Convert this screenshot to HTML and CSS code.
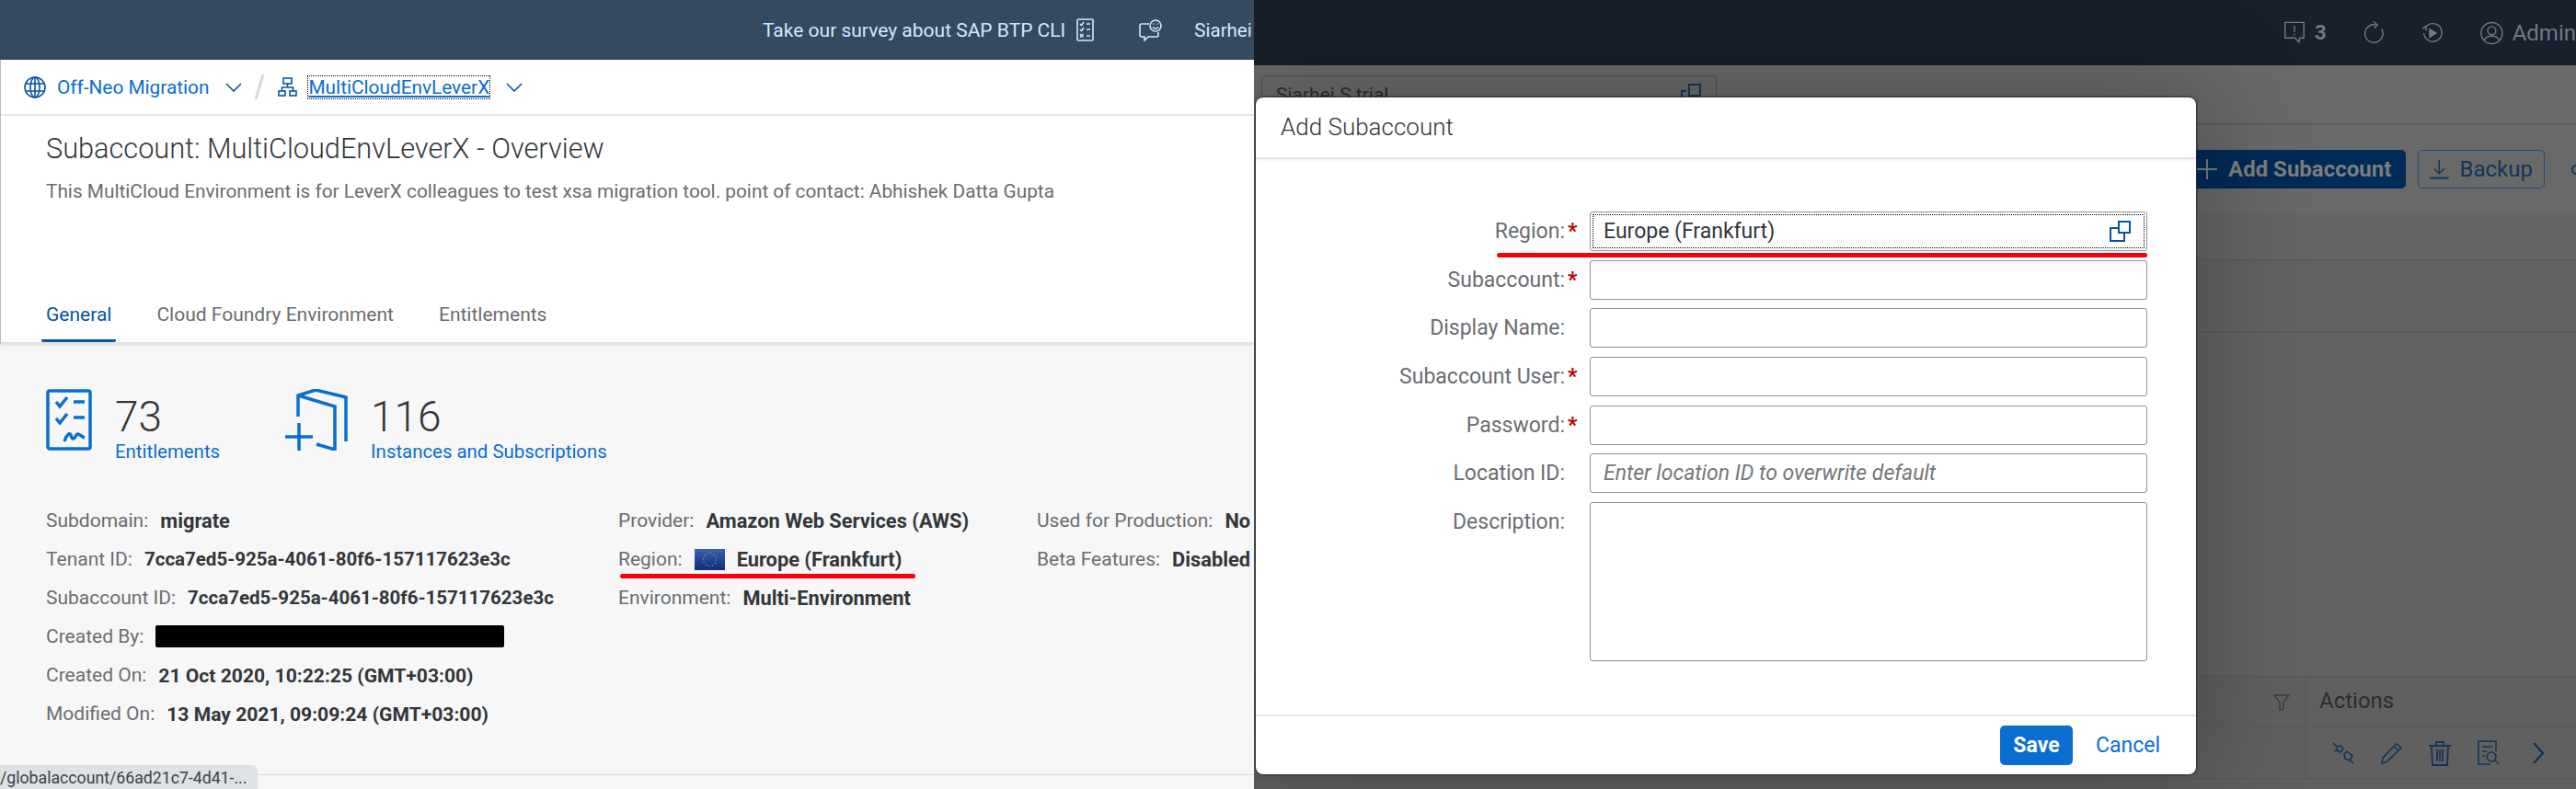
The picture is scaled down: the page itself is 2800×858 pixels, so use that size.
FILE: index.html
```html
<!DOCTYPE html>
<html lang="en">
<head>
    <meta charset="UTF-8">
    <title>Add Subaccount</title>
    <link rel="stylesheet" href="styles.css">
</head>
<body>
    <!-- left screenshot: subaccount overview -->
    <section class="overview">
        <header class="shell-bar">
            <span class="survey">Take our survey about SAP BTP CLI</span>
            <svg class="survey-icon" width="19" height="25" viewBox="0 0 19 25" fill="none" stroke="currentColor" stroke-width="1.6">
                <rect x="1" y="1" width="17" height="23" rx="1"/>
                <path d="M4 6l1.500 1.500L8 4M11 6h4M4 12l1.500 1.500L8 10M11 12h4M4 17l3.500 3.500M7.500 17L4 20.500M11 19h4"/>
            </svg>
            <svg class="feedback-icon" width="26" height="24" viewBox="0 0 26 24" fill="none" stroke="currentColor" stroke-width="1.6">
                <path d="M11 5H3a2 2 0 0 0-2 2v10a2 2 0 0 0 2 2h3v4l4-4h9a2 2 0 0 0 2-2v-3"/>
                <circle cx="18" cy="7" r="6"/>
                <path d="M15 8.500c1.500 2 4.500 2 6 0M16 4.500v1M20 4.500v1"/>
            </svg>
            <span class="user-name">Siarhei</span>
        </header>

        <div class="sheet">
            <nav class="crumbs">
                <svg class="globe" width="24" height="24" viewBox="0 0 24 24" fill="none" stroke="#0854a0" stroke-width="1.6">
                    <circle cx="12" cy="12" r="11"/>
                    <ellipse cx="12" cy="12" rx="5" ry="11"/>
                    <path d="M12 1v22M2 8h20M2 16h20"/>
                </svg>
                <a class="crumb-link">Off-Neo Migration</a>
                <svg class="chevron" width="18" height="10" viewBox="0 0 18 10" fill="none" stroke="#0854a0" stroke-width="1.600"><path d="M1 1l8 8 8-8"/></svg>
                <svg class="slash" width="10" height="27" viewBox="0 0 10 27" fill="none" stroke="#d9d9d9" stroke-width="3"><path d="M9 0L1 27"/></svg>
                <svg class="tree" width="21" height="21" viewBox="0 0 21 21" fill="none" stroke="#0854a0" stroke-width="1.600">
                    <rect x="6" y="1" width="9" height="6"/>
                    <rect x="1" y="15" width="7" height="5"/>
                    <rect x="13" y="15" width="7" height="5"/>
                    <path d="M10.500 7v4M4.500 15v-4h12v4"/>
                </svg>
                <a class="crumb-link crumb-current">MultiCloudEnvLeverX</a>
                <svg class="chevron chevron-last" width="18" height="10" viewBox="0 0 18 10" fill="none" stroke="#0854a0" stroke-width="1.600"><path d="M1 1l8 8 8-8"/></svg>
            </nav>

            <div class="page-head">
                <h1>Subaccount: MultiCloudEnvLeverX - Overview</h1>
                <p>This MultiCloud Environment is for LeverX colleagues to test xsa migration tool. point of contact: Abhishek Datta Gupta</p>
            </div>

            <div class="tabs">
                <span class="tab tab-active">General</span>
                <span class="tab">Cloud Foundry Environment</span>
                <span class="tab">Entitlements</span>
            </div>
        </div>

        <div class="content">
            <div class="stats">
                <div class="stat">
                    <svg width="50" height="67" viewBox="0 0 50 67" fill="none" stroke="#0a6ed1" stroke-width="3.500">
                        <rect x="2" y="2" width="46" height="63" rx="2"/>
                        <path d="M11 14l4 5 8-10M30 14h12M11 32l4 5 8-10M30 31h12M20 57c2-7 6-10 7-7 1 5 3 6 6 0 2-3 5 2 9 3"/>
                    </svg>
                    <div>
                        <div class="stat-num">73</div>
                        <a class="stat-link">Entitlements</a>
                    </div>
                </div>
                <div class="stat">
                    <svg width="68" height="67" viewBox="0 0 68 67" fill="none" stroke="#0a6ed1" stroke-width="3.500">
                        <path d="M14 30V7L33 1l33 8v48M14 7l40 12v47l-20-6M15 37v30M0 52h30"/>
                    </svg>
                    <div>
                        <div class="stat-num">116</div>
                        <a class="stat-link">Instances and Subscriptions</a>
                    </div>
                </div>
            </div>

            <div class="facts">
                <div class="facts-col facts-col-a">
                    <div class="fact"><span class="k">Subdomain:</span><b>migrate</b></div>
                    <div class="fact"><span class="k">Tenant ID:</span><b class="v-id">7cca7ed5-925a-4061-80f6-157117623e3c</b></div>
                    <div class="fact"><span class="k">Subaccount ID:</span><b class="v-id">7cca7ed5-925a-4061-80f6-157117623e3c</b></div>
                    <div class="fact"><span class="k">Created By:</span><span class="redacted"></span></div>
                    <div class="fact"><span class="k">Created On:</span><b class="v-date">21 Oct 2020, 10:22:25 (GMT+03:00)</b></div>
                    <div class="fact"><span class="k">Modified On:</span><b class="v-date">13 May 2021, 09:09:24 (GMT+03:00)</b></div>
                </div>
                <div class="facts-col facts-col-b">
                    <div class="fact"><span class="k">Provider:</span><b>Amazon Web Services (AWS)</b></div>
                    <div class="fact region-fact">
                        <span class="k">Region:</span>
                        <svg class="flag" width="33" height="23" viewBox="0 0 33 23">
                            <defs><linearGradient id="eu" x1="0" y1="0" x2="0" y2="1"><stop offset="0" stop-color="#3a62b0"/><stop offset="1" stop-color="#0b2c80"/></linearGradient></defs>
                            <rect width="33" height="23" fill="url(#eu)"/>
                            <circle cx="16.500" cy="11.500" r="7" fill="none" stroke="#b9a548" stroke-width="1.200" stroke-dasharray="1.200 2.500"/>
                        </svg>
                        <b>Europe (Frankfurt)</b>
                        <span class="red-line red-line-fact"></span>
                    </div>
                    <div class="fact"><span class="k">Environment:</span><b>Multi-Environment</b></div>
                </div>
                <div class="facts-col">
                    <div class="fact"><span class="k">Used for Production:</span><b>No</b></div>
                    <div class="fact"><span class="k">Beta Features:</span><b>Disabled</b></div>
                </div>
            </div>
        </div>

        <div class="status-url">/globalaccount/66ad21c7-4d41-...</div>
    </section>

    <!-- right screenshot: dimmed cockpit behind the dialog -->
    <section class="cockpit">
        <header class="cockpit-bar">
            <svg width="27" height="27" viewBox="0 0 27 27" fill="none" stroke="currentColor" stroke-width="1.600">
                <path d="M2 1h23v19h-5l-1 5-5-5H2zM13.500 5v8M13.500 15v2"/>
            </svg>
            <span class="alert-count">3</span>
            <svg class="bar-refresh" width="25" height="27" viewBox="0 0 25 27" fill="none" stroke="currentColor" stroke-width="1.600">
                <path d="M21 9a11 11 0 1 1-7-5M11 0l5 4-4 4"/>
            </svg>
            <svg class="bar-play" width="26" height="25" viewBox="0 0 26 25" fill="none" stroke="currentColor" stroke-width="1.600">
                <path d="M5 6a11 11 0 1 1-2 7M1 8l4-3 1 5"/>
                <path d="M10 8l8 5-8 5z" fill="currentColor"/>
            </svg>
            <svg class="bar-user" width="28" height="28" viewBox="0 0 28 28" fill="none" stroke="currentColor" stroke-width="1.600">
                <circle cx="14" cy="14" r="13"/>
                <circle cx="14" cy="11" r="5"/>
                <path d="M5 23c2-7 16-7 18 0"/>
            </svg>
            <span class="admin">Admin</span>
        </header>

        <div class="cockpit-sub">
            <div class="trial-field">
                <span>Siarhei S trial</span>
                <svg width="23" height="22" viewBox="0 0 23 22" fill="none" stroke="#12345a" stroke-width="2"><path d="M1 21V8h5"/><rect x="9" y="1" width="12" height="12"/></svg>
            </div>
        </div>

        <div class="cockpit-tools">
            <button class="btn-add">
                <svg width="22" height="22" viewBox="0 0 22 22" stroke="currentColor" stroke-width="2"><path d="M11 0v22M0 11h22"/></svg>
                Add Subaccount
            </button>
            <button class="btn-backup">
                <svg width="26" height="26" viewBox="0 0 26 26" fill="none" stroke="currentColor" stroke-width="1.800"><path d="M13 0v19M6 12l7 7 7-7"/><path d="M0 25h26" stroke-width="2.500"/></svg>
                Backup
            </button>
            <span class="tool-dot"></span>
        </div>

        <div class="cockpit-band cockpit-band-a"></div>
        <div class="cockpit-band cockpit-band-b"></div>
        <div class="cockpit-fill"></div>

        <div class="grid-row grid-head">
            <div class="cell-main">
                <svg width="18" height="18" viewBox="0 0 18 18" fill="none" stroke="#3a3a3a" stroke-width="1.400"><path d="M1 1h16l-6 8v7l-4 1V9z"/></svg>
            </div>
            <div class="cell-actions">Actions</div>
        </div>
        <div class="grid-row grid-body">
            <div class="cell-main cell-lines"></div>
            <div class="cell-actions action-icons">
                <svg width="24" height="24" viewBox="0 0 24 24" fill="none" stroke="#12345a" stroke-width="1.600"><path d="M1 1l4 4M5 5l4-1 3 3-3 4-4-2zM13 13l3-3 6 5-3 5-5-2zM20 20l3 3M2 9l3 1"/></svg>
                <svg width="23" height="24" viewBox="0 0 23 24" fill="none" stroke="#12345a" stroke-width="1.600"><path d="M17 2l5 4L7 21l-6 2 1-6zM14 5l5 4"/></svg>
                <svg width="24" height="27" viewBox="0 0 24 27" fill="none" stroke="#12345a" stroke-width="1.800"><path d="M0 5h24M8 4V1h8v3M3 6l1 20h16l1-20M9 9v13M12 9v13M15 9v13"/></svg>
                <svg width="24" height="28" viewBox="0 0 24 28" fill="none" stroke="#12345a" stroke-width="1.600"><path d="M20 12V1H1v25h13M5 7h11M5 12h5M5 17h3"/><circle cx="15" cy="18" r="5"/><path d="M19 22l4 4"/></svg>
                <svg class="action-next" width="14" height="24" viewBox="0 0 14 24" fill="none" stroke="#12345a" stroke-width="2.500"><path d="M2 1l10 11L2 23"/></svg>
            </div>
        </div>
        <div class="grid-row grid-last"></div>

        <div class="dialog">
            <div class="dialog-head">Add Subaccount</div>
            <form class="dialog-form">
                <label class="form-label">Region:</label><span class="req">*</span>
                <div class="region-input">
                    <input class="form-input input-focused" type="text" value="Europe (Frankfurt)">
                    <svg class="copy-icon" width="23" height="23" viewBox="0 0 23 23" fill="none" stroke="#0854a0" stroke-width="2"><path d="M16 14v8H1V8h8"/><rect x="10" y="1" width="12" height="12"/></svg>
                    <span class="red-line red-line-form"></span>
                </div>
                <label class="form-label">Subaccount:</label><span class="req">*</span>
                <input class="form-input" type="text">
                <label class="form-label">Display Name:</label><span></span>
                <input class="form-input" type="text">
                <label class="form-label">Subaccount User:</label><span class="req">*</span>
                <input class="form-input" type="text">
                <label class="form-label">Password:</label><span class="req">*</span>
                <input class="form-input" type="text">
                <label class="form-label">Location ID:</label><span></span>
                <input class="form-input" type="text" placeholder="Enter location ID to overwrite default">
                <label class="form-label">Description:</label><span></span>
                <textarea class="form-input form-area"></textarea>
            </form>
            <div class="dialog-foot">
                <button class="btn-save">Save</button>
                <button class="btn-cancel">Cancel</button>
            </div>
        </div>
    </section>
</body>
</html>
```

FILE: styles.css
```css
html, body {
    margin: 0;
    height: 858px;
    overflow: hidden;
}
body {
    display: flex;
    width: 2800px;
    font-family: Roboto, "Liberation Sans", sans-serif;
    font-size: 21px;
    color: #32363a;
}

/* left: overview */
.overview {
    position: relative;
    z-index: 2;
    width: 1363px;
    height: 858px;
    overflow: hidden;
    background: #f7f7f7;
    flex: none;
}
.shell-bar {
    display: flex;
    align-items: center;
    height: 65px;
    padding-left: 829px;
    background: #354a5f;
    color: #d1e8ff;
    white-space: nowrap;
}
.survey-icon {
    margin-left: 12px;
    flex: none;
}
.feedback-icon {
    margin-left: 49px;
    flex: none;
}
.user-name {
    margin-left: 34px;
    font-size: 20.5px;
}
.sheet {
    background: #fff;
    border-left: 1px solid #bbb;
    box-shadow: 0 1px 3px rgba(0,0,0,0.12);
}
.crumbs {
    display: flex;
    align-items: center;
    height: 59px;
    padding-left: 25px;
    border-bottom: 2px solid #e5e5e5;
    font-size: 20.8px;
}
.crumb-link {
    color: #0a6ed1;
}
.globe {
    margin-right: 12px;
}
.chevron {
    margin-left: 18px;
}
.slash {
    margin-left: 14px;
}
.tree {
    margin-left: 15px;
    margin-right: 12px;
}
.crumb-current {
    outline: 1px dotted #000;
    text-decoration: underline;
    line-height: 24px;
}
.page-head {
    height: 194px;
    padding-left: 49px;
    box-sizing: border-box;
}
.page-head h1 {
    margin: 0;
    padding-top: 16px;
    font-size: 30.7px;
    line-height: 40px;
    font-weight: 300;
}
.page-head p {
    margin: 12px 0 0;
    line-height: 28px;
    font-size: 20.8px;
    color: #6a6d70;
}
.tabs {
    display: flex;
    gap: 39px;
    height: 55px;
    padding-left: 44px;
    margin-top: -1px;
    box-sizing: border-box;
    border-bottom: 2px solid #e3e3e3;
}
.tab {
    padding: 0 5px;
    line-height: 46px;
    color: #6a6d70;
}
.tab-active {
    color: #0854a0;
    height: 53px;
    box-sizing: border-box;
    border-bottom: 3px solid #0854a0;
    border-radius: 2px;
}
.content {
    padding: 49px 0 0 50px;
}
.stats {
    display: flex;
    gap: 71px;
    height: 78px;
    margin-bottom: 44px;
}
.stat {
    display: flex;
    gap: 25px;
}
.stat-num {
    font-size: 46px;
    line-height: 50px;
    margin-top: 5px;
    font-weight: 300;
}
.stat-link {
    display: block;
    color: #0a6ed1;
    font-size: 20.4px;
    line-height: 26px;
}
.facts {
    display: flex;
}
.facts-col-a {
    width: 622px;
    flex: none;
}
.facts-col-b {
    width: 455px;
    flex: none;
}
.fact {
    display: flex;
    align-items: center;
    gap: 13px;
    height: 42px;
    white-space: nowrap;
    position: relative;
}
.fact .k {
    color: #6a6d70;
}
.fact b {
    font-weight: 700;
    font-size: 21.8px;
}
.fact .v-id {
    font-size: 20.5px;
}
.fact .v-date {
    font-size: 21.1px;
}
.redacted {
    width: 379px;
    height: 24px;
    background: #000;
    border-radius: 2px;
}
.red-line {
    position: absolute;
    height: 5px;
    background: #f5000c;
    border-radius: 3px;
}
.red-line-fact {
    left: 2px;
    top: 37px;
    width: 321px;
}
.status-url {
    position: absolute;
    z-index: 1;
    left: 0;
    bottom: 0;
    width: 280px;
    height: 26px;
    background: #dee1e6;
    border-radius: 0 6px 0 0;
    color: #3c4043;
    font-size: 17.7px;
    line-height: 28px;
    white-space: nowrap;
}
.overview::after {
    content: "";
    position: absolute;
    left: 0;
    right: 0;
    top: 842px;
    border-top: 1px solid #d9d9d9;
}

/* right: dimmed cockpit */
.cockpit {
    position: relative;
    flex: 1;
    height: 858px;
    overflow: hidden;
    background: #666;
}
.cockpit-bar {
    display: flex;
    align-items: center;
    height: 71px;
    padding-left: 1119px;
    background: #17202c;
    color: #6f7a86;
    box-sizing: border-box;
    white-space: nowrap;
}
.alert-count {
    margin-left: 10px;
    font-weight: 700;
    font-size: 22px;
}
.bar-refresh {
    margin-left: 41px;
}
.bar-play {
    margin-left: 40px;
}
.bar-user {
    margin-left: 41px;
}
.admin {
    margin-left: 10px;
    font-size: 24px;
}
.cockpit-sub {
    height: 65px;
    box-sizing: border-box;
    padding: 11px 0 0 8px;
    background: #6a6a6a;
    border-bottom: 2px solid #5e5e5e;
}
.trial-field {
    display: flex;
    justify-content: space-between;
    width: 495px;
    height: 54px;
    padding: 8px 15px;
    box-sizing: border-box;
    border: 1px solid #505050;
    border-radius: 3px;
    color: #2c2c2c;
    font-size: 21px;
}
.cockpit-tools {
    display: flex;
    align-items: center;
    gap: 13px;
    height: 96px;
    padding-left: 1000px;
    box-sizing: border-box;
    background: #696969;
}
.cockpit-tools button {
    display: flex;
    align-items: center;
    gap: 12px;
    height: 42px;
    border-radius: 5px;
    font-family: inherit;
    font-size: 24px;
    white-space: nowrap;
}
.btn-add {
    flex: none;
    width: 252px;
    padding: 0 0 0 25px;
    border: none;
    background: #002a57;
    color: #7d7d7d;
    font-weight: 700;
}
.btn-backup {
    flex: none;
    width: 138px;
    padding: 0 12px;
    border: 1px solid #1d4a78;
    background: none;
    color: #12345a;
}
.tool-dot {
    flex: none;
    width: 7px;
    height: 7px;
    margin-left: 16px;
    border: 2px solid #12345a;
    border-radius: 50%;
}
.cockpit-band {
    border-bottom: 2px solid #5d5d5d;
    background: #656565;
}
.cockpit-band-a {
    height: 50px;
}
.cockpit-band-b {
    height: 76px;
    background: #636363;
}
.cockpit-fill {
    height: 373px;
    background: #636363;
}
.grid-row {
    display: grid;
    grid-template-columns: 1144px 1fr;
    border-top: 1px solid #585858;
    background: #606060;
}
.grid-head {
    height: 55px;
    color: #2c2c2c;
    font-size: 24px;
}
.grid-body {
    height: 54px;
}
.grid-last {
    height: 16px;
}
.cell-main {
    display: flex;
    align-items: center;
    justify-content: flex-end;
    padding-right: 17px;
    border-right: 1px solid #585858;
}
.cell-actions {
    display: flex;
    align-items: center;
    padding: 0 0 3px 14px;
}
.action-icons {
    gap: 29px;
    padding: 0 0 0 28px;
}
.action-next {
    margin-left: 6px;
}

/* dialog sits over the dimmed page */
.dialog {
    position: absolute;
    left: 2px;
    top: 106px;
    width: 1022px;
    height: 736px;
    display: flex;
    flex-direction: column;
    background: #fff;
    border-radius: 8px;
    box-shadow: 0 0 2px 1px #2c2c2c, 0 0 110px 20px rgba(0,0,0,0.22);
}
.dialog-head {
    flex: none;
    height: 65px;
    padding-left: 27px;
    box-sizing: border-box;
    font-size: 26px;
    line-height: 65px;
    font-weight: 300;
    box-shadow: 0 2px 3px rgba(0,0,0,0.14);
}
.dialog-form {
    flex: 1;
    display: grid;
    grid-template-columns: 336px 27px 606px;
    grid-auto-rows: 43px;
    row-gap: 9.67px;
    align-content: start;
    padding-top: 59px;
    font-size: 23px;
}
.form-label {
    text-align: right;
    line-height: 43px;
    color: #6a6d70;
    white-space: nowrap;
}
.req {
    padding-left: 3px;
    line-height: 43px;
    color: #bb0000;
    font-weight: 700;
}
.form-input {
    display: block;
    width: 606px;
    height: 43px;
    box-sizing: border-box;
    padding: 0 14px;
    background: #fff;
    border: 1px solid #89919a;
    border-radius: 3px;
    font-family: inherit;
    font-size: 23px;
    color: #32363a;
}
.form-input::placeholder {
    color: #74777a;
    font-style: italic;
}
.input-focused {
    outline: 1px dotted #000;
    outline-offset: -4px;
}
.form-area {
    height: 173px;
    resize: none;
}
.region-input {
    position: relative;
}
.copy-icon {
    position: absolute;
    right: 18px;
    top: 10px;
}
.red-line-form {
    left: -101px;
    top: 45px;
    width: 707px;
}
.dialog-foot {
    flex: none;
    display: flex;
    align-items: center;
    justify-content: flex-end;
    height: 65px;
    padding-right: 14px;
    box-sizing: border-box;
    border-top: 2px solid #e5e5e5;
}
.dialog-foot button {
    height: 43px;
    border: none;
    border-radius: 5px;
    font-family: inherit;
    font-size: 23px;
}
.btn-save {
    width: 79px;
    background: #0a6ed1;
    color: #fff;
    font-weight: 700;
}
.btn-cancel {
    padding: 0 25px;
    background: none;
    color: #0a6ed1;
}
```
